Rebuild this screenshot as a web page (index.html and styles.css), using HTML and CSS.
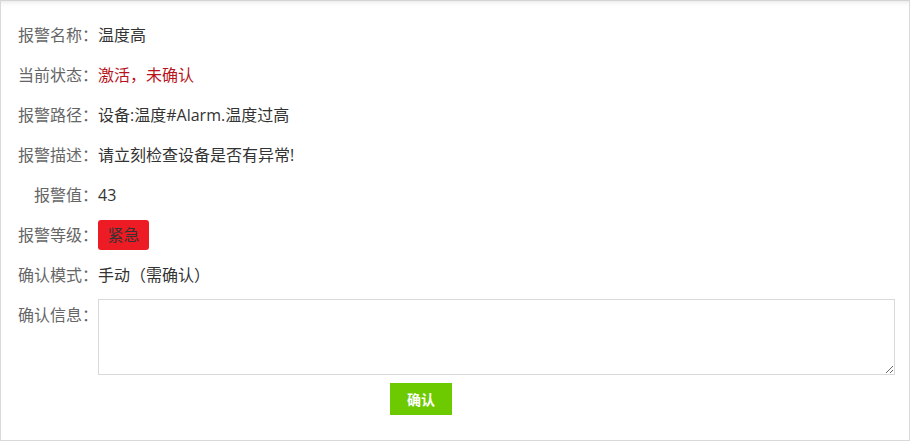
FILE: index.html
```html
<!DOCTYPE html>
<html lang="zh-CN">
<head>
<meta charset="utf-8">
<title>报警确认</title>
<link rel="stylesheet" href="styles.css">
</head>
<body>
<div class="panel">
  <div class="row"><span class="label">报警名称：</span><span class="value">温度高</span></div>
  <div class="row"><span class="label">当前状态：</span><span class="value status">激活，未确认</span></div>
  <div class="row"><span class="label">报警路径：</span><span class="value">设备:温度#Alarm.温度过高</span></div>
  <div class="row"><span class="label">报警描述：</span><span class="value">请立刻检查设备是否有异常!</span></div>
  <div class="row"><span class="label">报警值：</span><span class="value">43</span></div>
  <div class="row"><span class="label">报警等级：</span><span class="badge">紧急</span></div>
  <div class="row"><span class="label">确认模式：</span><span class="value">手动（需确认）</span></div>
  <div class="row row-top"><span class="label">确认信息：</span><textarea class="msg"></textarea></div>
  <div class="actions"><button class="btn" type="button">确认</button></div>
</div>
</body>
</html>
```

FILE: styles.css
```css
* { box-sizing: border-box; }
html, body { margin: 0; padding: 0; background: #fff; }
body {
  font-family: "Open Sans", "Noto Sans CJK SC", sans-serif;
  font-size: 16px;
  color: #333;
}
.panel {
  width: 910px;
  height: 441px;
  border: 1px solid #d9d9d9;
  border-top-color: #d4d4d4;
  background: linear-gradient(to bottom, #eeeeee 0px, #fafafa 3px, #ffffff 6px);
  padding: 14px 14px 0 0;
}
.row {
  display: flex;
  align-items: center;
  height: 40px;
  line-height: 40px;
}
.label {
  width: 97px;
  flex: none;
  text-align: right;
  color: #666;
}
.value { color: #333; }
.status { color: #b8141d; }
.badge {
  display: inline-block;
  height: 30px;
  line-height: 30px;
  padding: 0 9.5px;
  font-size: 16px;
  background: #ed1c24;
  color: #333;
  border-radius: 3px;
}
.row-top {
  align-items: flex-start;
  height: auto;
}
.msg {
  flex: 1;
  display: block;
  height: 76px;
  margin: 4px 0 0 0;
  border: 1px solid #d9d9d9;
  font: inherit;
  font-size: 14px;
  padding: 4px 6px;
  resize: both;
  outline: none;
}
.actions {
  margin-top: 8px;
  padding-left: 389px;
}
.btn {
  width: 62px;
  height: 32px;
  border: 0;
  padding: 0;
  background: #6dca00;
  color: #fff;
  font-family: "Open Sans", "Noto Sans CJK SC", sans-serif;
  font-size: 14px;
  font-weight: bold;
  cursor: pointer;
}
```
